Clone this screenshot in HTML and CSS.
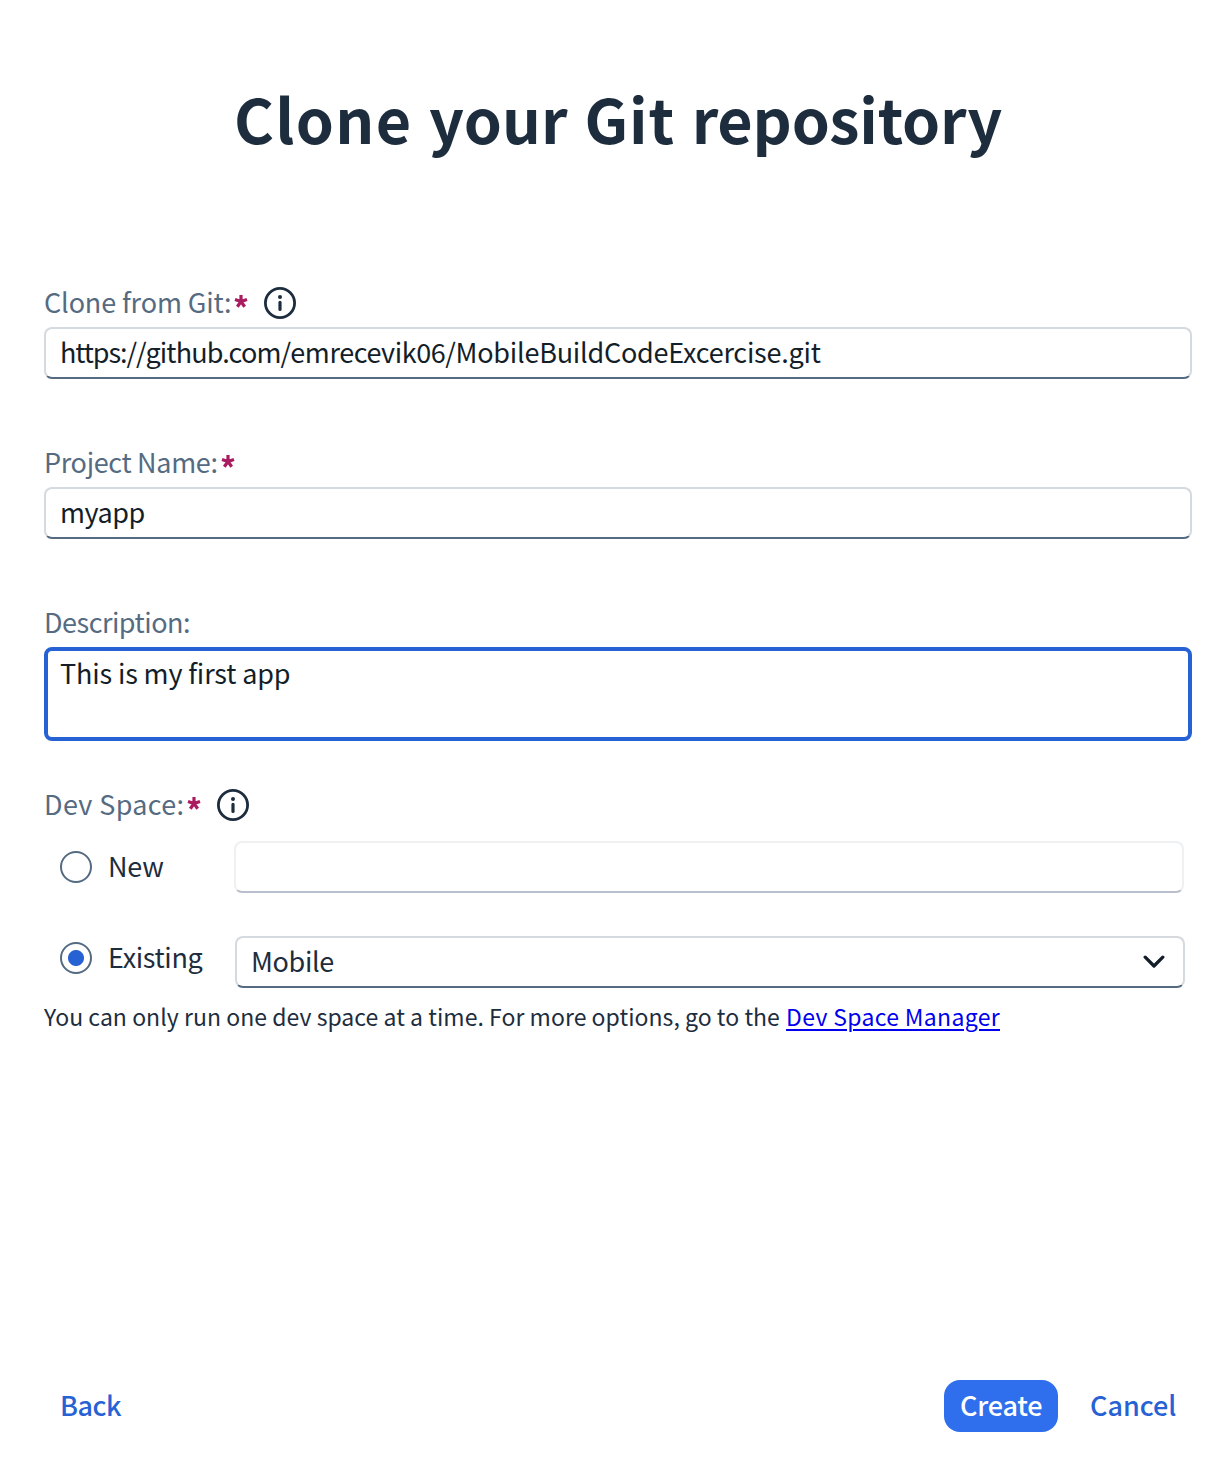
FILE: index.html
```html
<!DOCTYPE html>
<html lang="en">
<head>
<meta charset="utf-8">
<title>Clone your Git repository</title>
<link rel="stylesheet" href="styles.css">
</head>
<body>
<main class="dialog">
  <h1 class="title"><span class="w-clone">Clone</span> your <span class="w-git">Git</span> <span class="w-repo">repository</span></h1>
  <section class="field">
    <div class="label"><span class="t-clone">Clone from Git:</span><svg class="star" viewBox="0 0 14 14"><path d="M7 7.5V1M7 7.5L13 5.5M7 7.5L10.7 12.7M7 7.5L3.3 12.7M7 7.5L1 5.5"/></svg>
      <svg class="info" viewBox="0 0 32 32"><circle cx="16" cy="16" r="14.6"/><path d="M16 15.4v7"/><circle class="dot" cx="16" cy="10" r="2"/></svg></div>
    <div class="input"><span class="t-url"><b class="u-scheme">https://</b><b class="u-host">github.com/</b><b class="u-user">emrecevik06/</b>MobileBuildCodeExcercise.git</span></div>
  </section>
  <section class="field">
    <div class="label"><span class="t-project">Project Name:</span><svg class="star" viewBox="0 0 14 14"><path d="M7 7.5V1M7 7.5L13 5.5M7 7.5L10.7 12.7M7 7.5L3.3 12.7M7 7.5L1 5.5"/></svg></div>
    <div class="input"><span class="t-myapp">myapp</span></div>
  </section>
  <section class="field field-description">
    <div class="label"><span class="t-desc">Description:</span></div>
    <div class="input area"><span class="t-first">This is my first app</span></div>
  </section>
  <section class="space">
    <div class="label"><span class="t-dev">Dev Space:</span><svg class="star" viewBox="0 0 14 14"><path d="M7 7.5V1M7 7.5L13 5.5M7 7.5L10.7 12.7M7 7.5L3.3 12.7M7 7.5L1 5.5"/></svg>
      <svg class="info" viewBox="0 0 32 32"><circle cx="16" cy="16" r="14.6"/><path d="M16 15.4v7"/><circle class="dot" cx="16" cy="10" r="2"/></svg></div>
    <div class="option">
      <div class="choice"><i class="radio"></i><span class="t-new">New</span></div>
      <div class="input disabled"></div>
    </div>
    <div class="option option-existing">
      <div class="choice"><i class="radio checked"></i><span class="t-existing">Existing</span></div>
      <div class="input select"><span class="t-mobile">Mobile</span><svg class="chevron" viewBox="0 0 22 14"><path d="M2.2 2.2L11 11L19.8 2.2"/></svg></div>
    </div>
    <p class="hint"><span class="t-hint">You can only run one dev space at a time. For more options, go to the</span> <a class="t-link" href="#">Dev Space Manager</a></p>
  </section>
  <footer class="actions">
    <button class="btn back"><span class="t-back">Back</span></button>
    <button class="btn primary"><span class="t-create">Create</span></button>
    <button class="btn cancel"><span class="t-cancel">Cancel</span></button>
  </footer>
</main>
</body>
</html>
```
FILE: styles.css
```css
* { box-sizing: border-box; }
body {
  margin: 0;
  background: #fff;
  color: #1d2d3e;
  font: 27px/36px "Noto Sans CJK SC", "Noto Sans", sans-serif;
}
.dialog {
  height: 1476px;
  padding: 78px 38px 44px 44px;
  display: flex;
  flex-direction: column;
  white-space: nowrap;
}
.title {
  margin: 0 0 125px;
  font-size: 61px;
  line-height: 80px;
  font-weight: 700;
  letter-spacing: 0.2px;
  word-spacing: 2.5px;
  text-align: center;
}
.w-clone { letter-spacing: 1.3px; }
.w-git { letter-spacing: 0.9px; }
.w-repo { letter-spacing: -0.2px; }
.field { height: 160px; }
.field-description { height: 182px; }
.label {
  display: flex;
  align-items: center;
  height: 40px;
  color: #556b82;
}
.field .label { height: 44px; padding-bottom: 4px; }
.label span, .input span, .choice span { padding-bottom: 3px; }
.star { width: 14px; height: 14px; margin: 0 15.5px 5px 3px; overflow: visible; }
.star path { fill: none; stroke: #aa1c60; stroke-width: 3.2; }
.info { width: 32px; height: 32px; fill: none; stroke: #1d2d3e; stroke-width: 2.8; stroke-linecap: round; }
.info path { stroke-width: 3.2; }
.info .dot { fill: #1d2d3e; stroke: none; }
.input {
  display: flex;
  align-items: center;
  height: 52px;
  padding: 0 14px;
  border: 2px solid #d5dade;
  border-bottom-color: #556b82;
  border-radius: 8px;
  color: #131e29;
}
.area {
  height: 94px;
  align-items: flex-start;
  padding: 4px 12px;
  border: 4px solid #2762d4;
}
.option { display: flex; margin-top: 16px; padding-right: 8px; }
.option .input { flex: 1; }
.option-existing { margin-top: 43px; padding-right: 7px; }
.option-existing .choice { width: 191px; height: 44px; }
.choice { display: flex; align-items: center; gap: 16px; width: 190px; height: 52px; padding-left: 16px; }
.radio { width: 32px; height: 32px; border: 2px solid #556b82; border-radius: 50%; }
.checked { background: radial-gradient(circle, #2762d4 7.5px, transparent 8.5px); }
.disabled { border-color: #eff0f2; border-bottom-color: #b9bfcc; }
.select { justify-content: space-between; color: #1d2d3e; }
.chevron { width: 22px; height: 14px; margin-right: 4px; fill: none; stroke: #131e29; stroke-width: 3.3; stroke-linecap: round; stroke-linejoin: round; }
.hint { margin: 10px 0 0; font-size: 23px; }
.hint a { color: #0000ee; text-decoration-thickness: 2px; text-underline-offset: 3px; }
.actions { display: flex; margin-top: auto; }
.btn {
  height: 52px;
  padding: 0 16px 3px;
  border: 0;
  border-radius: 16px;
  background: none;
  color: #2762d4;
  font: 500 27px/36px "Noto Sans CJK SC", "Noto Sans", sans-serif;
}
.back { margin-right: auto; }
.primary { width: 114px; margin-right: 16px; background: #2f6fed; color: #fff; }
.cancel { width: 118px; }

/* Tracking per text run */
.t-clone { letter-spacing: -0.13px; }
.t-url { letter-spacing: -0.23px; }
.t-url b { font-weight: 400; }
.t-url .u-scheme { letter-spacing: -1.1px; }
.t-url .u-host { letter-spacing: -0.85px; }
.t-url .u-user { letter-spacing: -0.42px; }
.t-project { letter-spacing: -0.33px; }
.t-myapp, .t-desc, .t-back { letter-spacing: -0.5px; }
.t-first { letter-spacing: -0.15px; }
.t-dev { letter-spacing: 0.35px; }
.t-new, .t-create { letter-spacing: -0.2px; }
.t-existing, .t-mobile { letter-spacing: -0.35px; }
.t-hint { letter-spacing: 0.04px; }
.t-link { letter-spacing: 0.33px; margin-left: 1px; }
```
